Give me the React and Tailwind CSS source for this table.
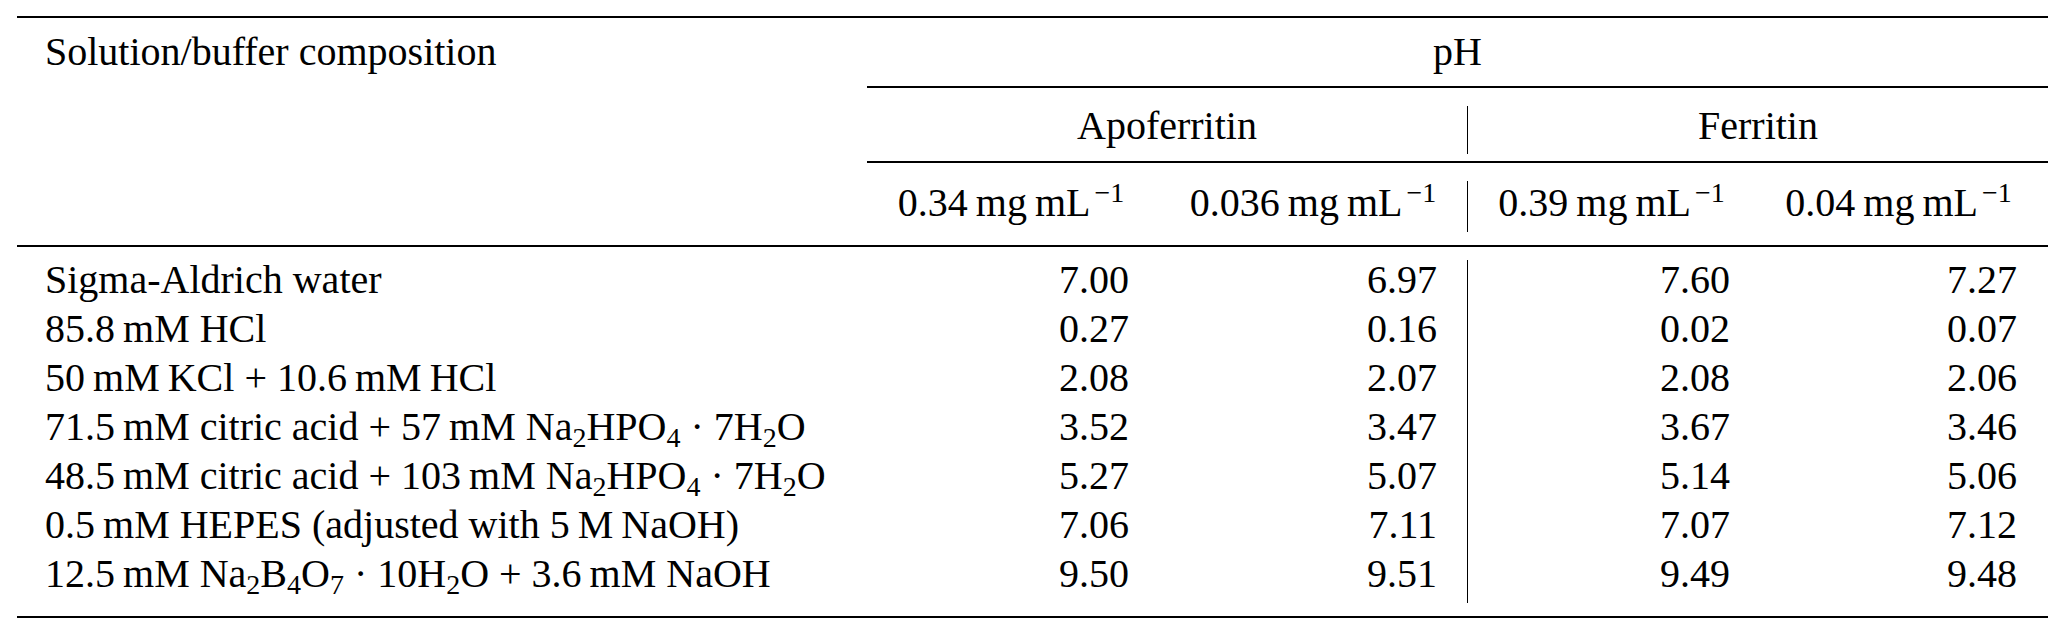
const T = '\u2009';

const grid = 'grid grid-cols-[850px_288px_312px_288px_293px]';

function Unit({ n }) {
    return (
        <>
            {n}{T}mg{T}mL<sup className="ml-[4px] text-[28px]">−1</sup>
        </>
    );
}

function S({ children }) {
    return <sub className="text-[28px]">{children}</sub>;
}

const rows = [
    { label: <>Sigma-Aldrich water</>, v: ['7.00', '6.97', '7.60', '7.27'] },
    { label: <>85.8{T}mM HCl</>, v: ['0.27', '0.16', '0.02', '0.07'] },
    { label: <>50{T}mM{T}KCl + 10.6{T}mM{T}HCl</>, v: ['2.08', '2.07', '2.08', '2.06'] },
    {
        label: <>71.5{T}mM citric acid + 57{T}mM Na<S>2</S>HPO<S>4</S> · 7H<S>2</S>O</>,
        v: ['3.52', '3.47', '3.67', '3.46'],
    },
    {
        label: <>48.5{T}mM citric acid + 103{T}mM Na<S>2</S>HPO<S>4</S> · 7H<S>2</S>O</>,
        v: ['5.27', '5.07', '5.14', '5.06'],
    },
    { label: <>0.5{T}mM HEPES (adjusted with 5{T}M{T}NaOH)</>, v: ['7.06', '7.11', '7.07', '7.12'] },
    {
        label: <>12.5{T}mM Na<S>2</S>B<S>4</S>O<S>7</S> · 10H<S>2</S>O + 3.6{T}mM NaOH</>,
        v: ['9.50', '9.51', '9.49', '9.48'],
    },
];

export default function App() {
    return (
        <div className="w-[2067px] h-[636px] bg-white text-black font-['Liberation_Serif',serif] text-[40px] leading-[40px] pt-[16px] pl-[17px] pr-[19px]">
            {/* top rule */}
            <div className="h-[2px] bg-black" />

            {/* header row 1 */}
            <div className={grid + ' h-[68px]'}>
                <div className="pl-[28px] pt-[14px] whitespace-nowrap">Solution/buffer composition</div>
                <div className="col-span-4 pt-[14px] text-center">pH</div>
            </div>
            <div className="ml-[850px] h-[2px] bg-black" />

            {/* header row 2 */}
            <div className="h-[73px] pt-[18px]">
                <div className={grid + ' h-[48px]'}>
                    <div />
                    <div className="col-span-2 text-center">Apoferritin</div>
                    <div className="col-span-2 text-center border-l border-black">Ferritin</div>
                </div>
            </div>
            <div className="ml-[850px] h-[2px] bg-black" />

            {/* header row 3 */}
            <div className="h-[82px] pt-[18px]">
                <div className={grid + ' h-[51px] whitespace-nowrap'}>
                    <div />
                    <div className="pt-[2px] text-center"><Unit n="0.34" /></div>
                    <div className="pt-[2px] text-center pl-[4px]"><Unit n="0.036" /></div>
                    <div className="pt-[2px] text-center border-l border-black"><Unit n="0.39" /></div>
                    <div className="pt-[2px] text-center pr-[6px]"><Unit n="0.04" /></div>
                </div>
            </div>
            <div className="h-[2px] bg-black" />

            {/* body */}
            <div className="h-[369px] pt-[13px]">
                {rows.map((r, i) => (
                    <div key={i} className={grid + ' h-[49px] whitespace-nowrap'}>
                        <div className="pl-[28px]">{r.label}</div>
                        <div className="text-right pr-[26px]">{r.v[0]}</div>
                        <div className="text-right pr-[30px]">{r.v[1]}</div>
                        <div className="text-right pr-[25px] border-l border-black">{r.v[2]}</div>
                        <div className="text-right pr-[31px]">{r.v[3]}</div>
                    </div>
                ))}
            </div>

            {/* bottom rule */}
            <div className="h-[2px] bg-black" />
        </div>
    );
}
